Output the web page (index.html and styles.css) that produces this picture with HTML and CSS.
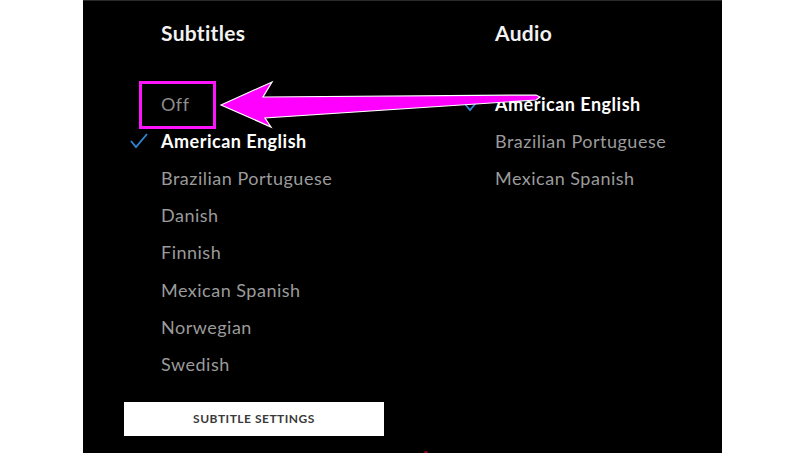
FILE: index.html
```html
<!DOCTYPE html>
<html>
<head>
<meta charset="utf-8">
<link rel="stylesheet" href="styles.css">
</head>
<body>
<div class="page">
  <div class="panel">
    <div class="columns">
      <section class="col col-subs">
        <h2 class="heading">Subtitles</h2>
        <ul class="list">
          <li class="item off"><span class="check"></span><span class="label">Off</span></li>
          <li class="item selected"><span class="check"><svg width="18" height="16" viewBox="0 0 18 16"><polyline points="1,8 6,14 17,1" fill="none" stroke="#2f87d8" stroke-width="1.8"/></svg></span><span class="label">American English</span></li>
          <li class="item"><span class="check"></span><span class="label">Brazilian Portuguese</span></li>
          <li class="item"><span class="check"></span><span class="label">Danish</span></li>
          <li class="item"><span class="check"></span><span class="label">Finnish</span></li>
          <li class="item"><span class="check"></span><span class="label">Mexican Spanish</span></li>
          <li class="item"><span class="check"></span><span class="label">Norwegian</span></li>
          <li class="item"><span class="check"></span><span class="label">Swedish</span></li>
        </ul>
        <button class="settings">SUBTITLE SETTINGS</button>
      </section>
      <section class="col">
        <h2 class="heading">Audio</h2>
        <ul class="list">
          <li class="item selected"><span class="check"><svg width="18" height="16" viewBox="0 0 18 16"><polyline points="1,8 6,14 17,1" fill="none" stroke="#2f87d8" stroke-width="1.8"/></svg></span><span class="label">American English</span></li>
          <li class="item"><span class="check"></span><span class="label">Brazilian Portuguese</span></li>
          <li class="item"><span class="check"></span><span class="label">Mexican Spanish</span></li>
        </ul>
      </section>
    </div>
    <span class="redmark"></span>
  </div>
  <div class="highlight"></div>
  <svg class="arrow" width="800" height="453" viewBox="0 0 800 453">
    <polygon points="221,105 272,82 263,97 536,95 540,97 536,100 265,118 271,127" fill="#ff00ff" stroke="#ffffff" stroke-width="1.2" stroke-linejoin="miter"/>
  </svg>
</div>
</body>
</html>
```

FILE: styles.css
```css
* { box-sizing: border-box; }
html, body { margin: 0; padding: 0; background: #ffffff; }
body { font-family: Lato, "Open Sans", sans-serif; }
.page {
  position: relative;
  width: 800px;
  height: 453px;
  overflow: hidden;
  padding-left: 83px;
}
.panel {
  position: relative;
  width: 639px;
  height: 453px;
  background: #000000;
  border-top: 1px solid #2a2a2a;
  padding: 20px 0 0 41px;
}
.columns { display: flex; }
.col { flex: none; display: flex; flex-direction: column; align-items: flex-start; }
.col-subs { width: 334px; }
.heading {
  margin: 0 0 40px 37px;
  font-size: 21px;
  line-height: 24px;
  font-weight: 700;
  color: #f2f2f2;
  letter-spacing: 0.3px;
}
.list { list-style: none; margin: 0; padding: 0; }
.item {
  display: flex;
  align-items: center;
  height: 37.2px;
  font-size: 18px;
  color: #9b9b9b;
  letter-spacing: 0.5px;
  white-space: nowrap;
}
.item.off { color: #8c8c8c; }
.item.selected { color: #ffffff; font-weight: 700; }
.check { width: 37px; flex: none; display: flex; align-items: center; padding-left: 6px; }
.check svg { display: block; }
.settings {
  margin-top: 19px;
  width: 260px;
  height: 34px;
  border: none;
  background: #ffffff;
  color: #3a3a3a;
  font-family: Lato, sans-serif;
  font-weight: 700;
  font-size: 12px;
  letter-spacing: 0.5px;
  padding: 0;
}
.redmark {
  position: absolute;
  left: 341px;
  bottom: 0;
  width: 4px;
  height: 2px;
  background: #8a0a1a;
  border-radius: 2px 2px 0 0;
}
.highlight {
  position: absolute;
  left: 139px;
  top: 81px;
  width: 77px;
  height: 48px;
  border: 3px solid #ff14ff;
}
.arrow { position: absolute; left: 0; top: 0; pointer-events: none; }
```
